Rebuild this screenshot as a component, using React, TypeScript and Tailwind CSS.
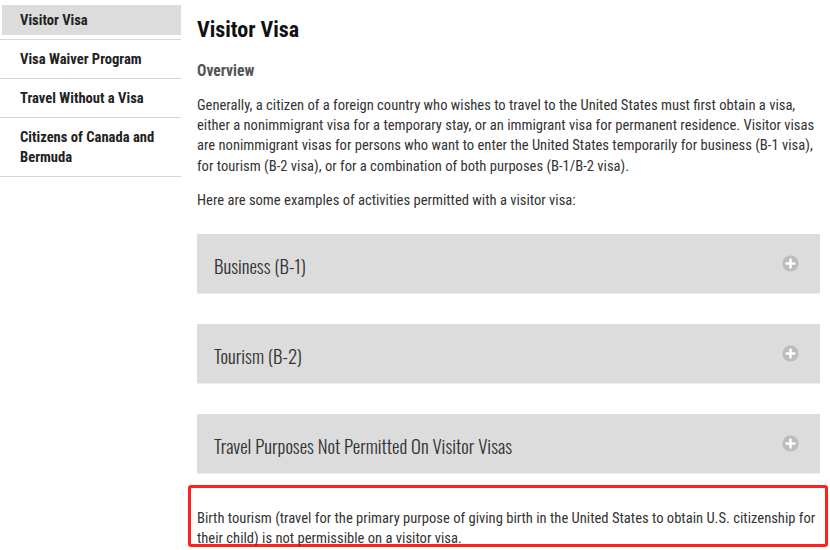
import React, { useState } from 'react';

const navItems = [
  { label: 'Visitor Visa', active: true },
  { label: 'Visa Waiver Program' },
  { label: 'Travel Without a Visa' },
  { label: 'Citizens of Canada and Bermuda' },
];

const sections = ['Business (B-1)', 'Tourism (B-2)', 'Travel Purposes Not Permitted On Visitor Visas'];

function PlusDot() {
  return (
    <svg width="17" height="17" viewBox="0 0 16 16" className="shrink-0">
      <circle cx="8" cy="8" r="7.6" fill="#bcbcbc" />
      <path d="M8 4.3v7.4M4.3 8h7.4" stroke="#fff" strokeWidth="2.3" strokeLinecap="round" />
    </svg>
  );
}

export default function App() {
  const [open, setOpen] = useState<number | null>(null);

  return (
    <div className="flex w-[830px] h-[550px] overflow-hidden bg-white font-['Roboto_Condensed',Roboto,sans-serif] text-[#333]">
      {/* Sidebar */}
      <aside className="w-[181px] shrink-0 pt-[1px]">
        {navItems.map((item) => (
          <div key={item.label} className="border-b border-[#d6d6d6] py-1">
            <a
              href="#"
              className={
                'block pr-4 py-[5px] text-[14.6px] leading-5 font-bold text-[#222] ' +
                (item.active ? 'bg-[#dcdcdc] ml-[2px] pl-[18px]' : 'pl-5')
              }
            >
              {item.label}
            </a>
          </div>
        ))}
      </aside>

      {/* Main */}
      <main className="flex-1 pl-4 pr-[10px] pt-[16px]">
        <h1 className="text-[22px] leading-7 font-bold text-[#111]">Visitor Visa</h1>
        <h2 className="mt-[17px] text-[15.6px] leading-5 font-bold text-[#555]">Overview</h2>
        <p className="mt-[14px] text-[14.6px] leading-[20.2px] text-[#333]">
          Generally, a citizen of a foreign country who wishes to travel to the United States must first obtain a visa,
          either a nonimmigrant visa for a temporary stay, or an immigrant visa for permanent residence. Visitor visas
          are nonimmigrant visas for persons who want to enter the United States temporarily for business (B-1 visa),
          for tourism (B-2 visa), or for a combination of both purposes (B-1/B-2 visa).
        </p>
        <p className="mt-[14px] text-[14.6px] leading-5 text-[#333]">
          Here are some examples of activities permitted with a visitor visa:
        </p>

        <div className="mt-[24px] flex flex-col gap-[30px]">
          {sections.map((s, i) => (
            <button
              key={s}
              onClick={() => setOpen(open === i ? null : i)}
              className="flex h-[60px] items-center justify-between bg-[#dcdcdc] border-b border-[#ececec] pl-[17px] pr-[21px] text-left"
            >
              <span className="pt-[5px] font-['Oswald',sans-serif] text-[18.75px] font-light text-[#333]">{s}</span>
              <PlusDot />
            </button>
          ))}
        </div>

        <div className="-ml-[9px] -mr-[8px] mt-[11px] h-[62px] rounded-[3px] border-[3px] border-[#f22] pl-[6px] pt-[20px] pr-2">
          <p className="text-[14.6px] leading-5 text-[#333]">
            Birth tourism (travel for the primary purpose of giving birth in the United States to obtain U.S. citizenship for
            their child) is not permissible on a visitor visa.
          </p>
        </div>
      </main>
    </div>
  );
}
